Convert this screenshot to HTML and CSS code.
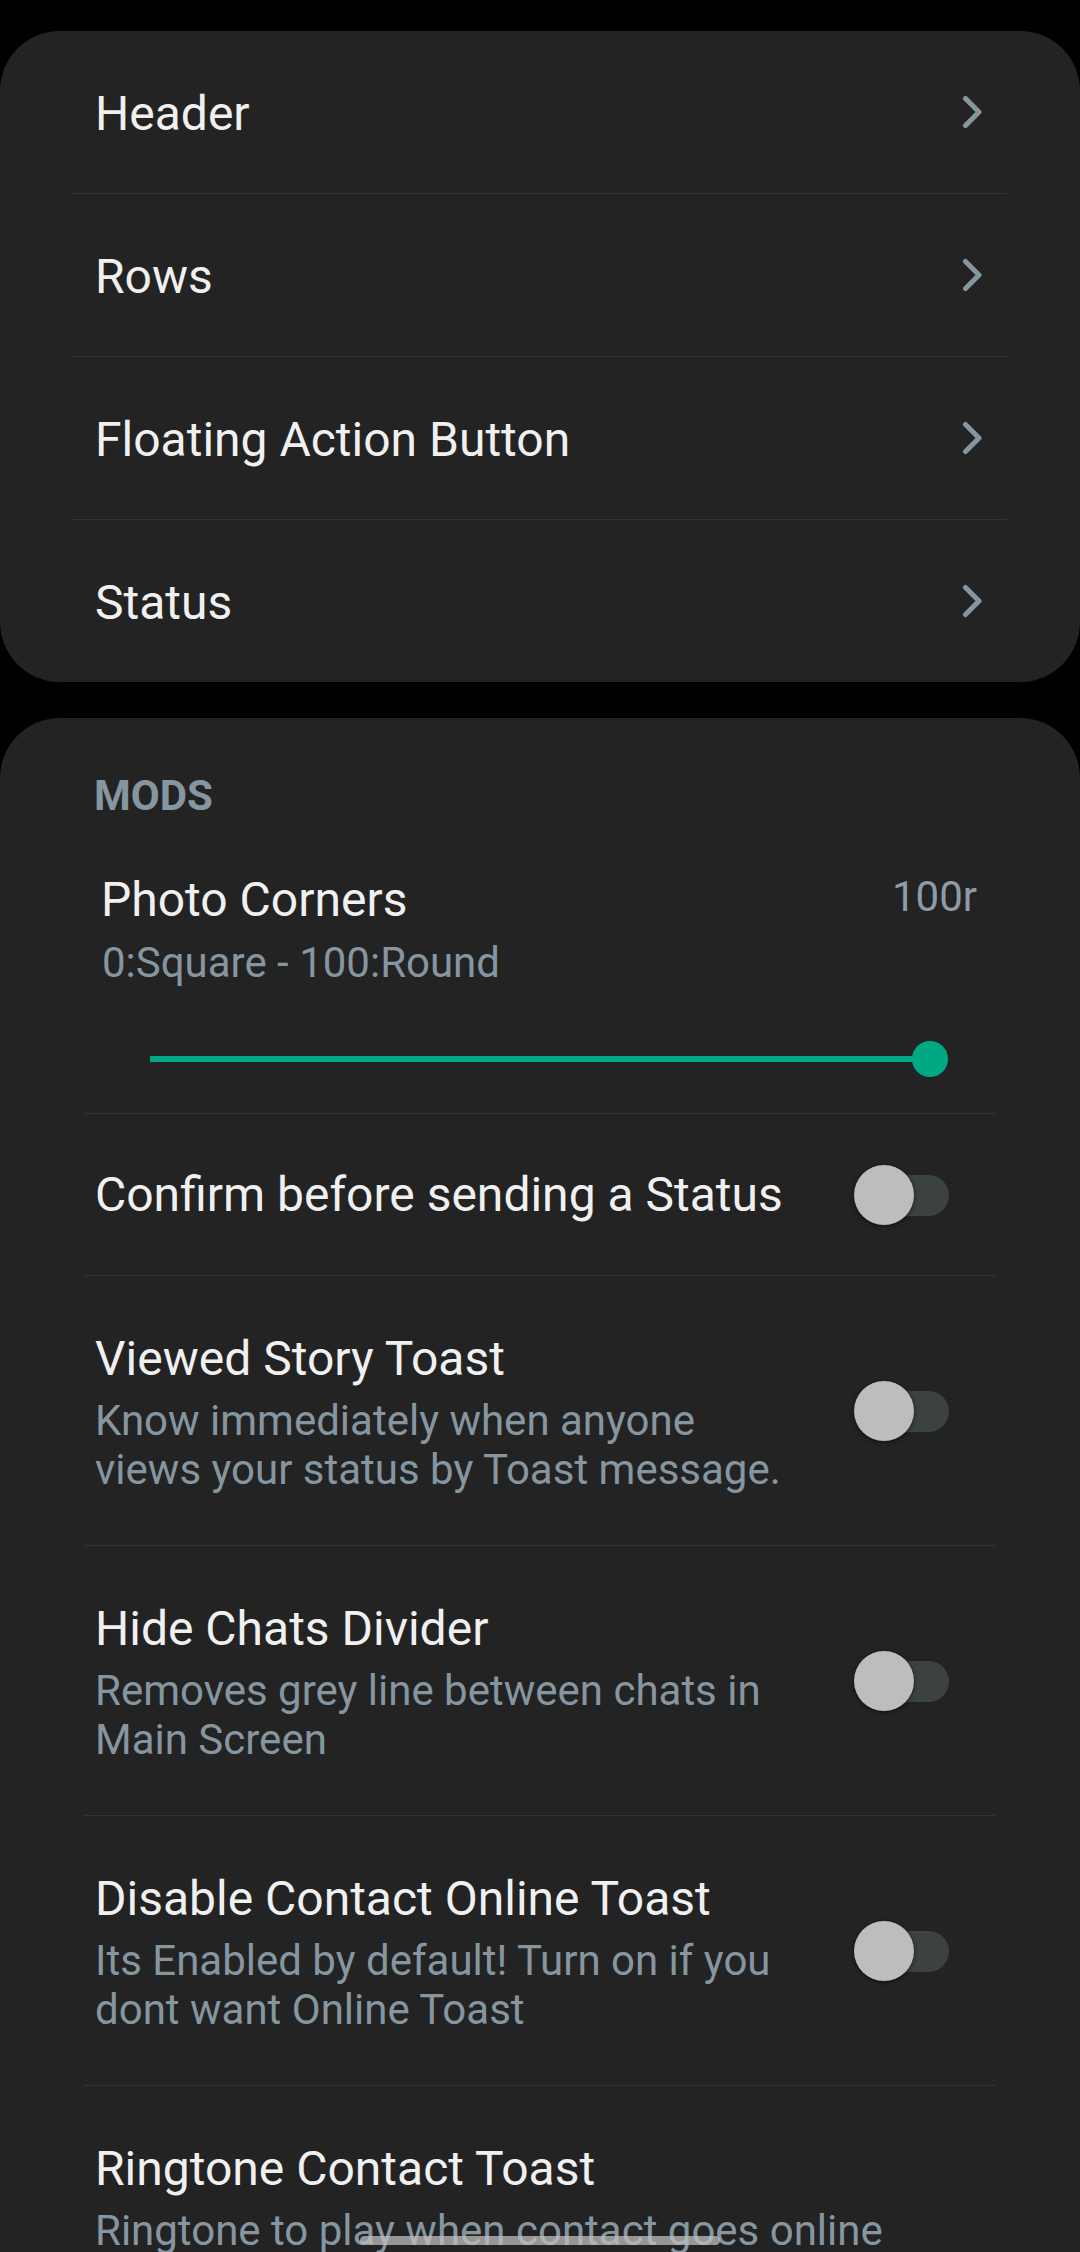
FILE: index.html
```html
<!DOCTYPE html>
<html lang="en">
<head>
<meta charset="utf-8">
<title>Settings</title>
<link rel="stylesheet" href="styles.css">
</head>
<body>
<div class="screen">
  <section class="card nav-card">
    <div class="nav-row"><span class="label">Header</span><svg class="chev" viewBox="0 0 22 34"><path d="M4.5 3.5 L18 17 L4.5 30.5"/></svg></div>
    <div class="divider wide"></div>
    <div class="nav-row"><span class="label">Rows</span><svg class="chev" viewBox="0 0 22 34"><path d="M4.5 3.5 L18 17 L4.5 30.5"/></svg></div>
    <div class="divider wide"></div>
    <div class="nav-row"><span class="label">Floating Action Button</span><svg class="chev" viewBox="0 0 22 34"><path d="M4.5 3.5 L18 17 L4.5 30.5"/></svg></div>
    <div class="divider wide"></div>
    <div class="nav-row"><span class="label">Status</span><svg class="chev" viewBox="0 0 22 34"><path d="M4.5 3.5 L18 17 L4.5 30.5"/></svg></div>
  </section>

  <section class="card mods-card">
    <h2 class="section-title">MODS</h2>

    <div class="slider-pref">
      <div class="slider-head">
        <span class="title">Photo Corners</span>
        <span class="value">100r</span>
      </div>
      <div class="summary">0:Square - 100:Round</div>
      <div class="slider"><div class="track"></div><div class="thumb"></div></div>
    </div>
    <div class="divider inset"></div>

    <div class="switch-row single">
      <div class="text"><div class="title">Confirm before sending a Status</div></div>
      <div class="switch"></div>
    </div>
    <div class="divider inset"></div>

    <div class="switch-row">
      <div class="text">
        <div class="title">Viewed Story Toast</div>
        <div class="summary">Know immediately when anyone<br>views your status by Toast message.</div>
      </div>
      <div class="switch"></div>
    </div>
    <div class="divider inset"></div>

    <div class="switch-row">
      <div class="text">
        <div class="title">Hide Chats Divider</div>
        <div class="summary">Removes grey line between chats in<br>Main Screen</div>
      </div>
      <div class="switch"></div>
    </div>
    <div class="divider inset"></div>

    <div class="switch-row">
      <div class="text">
        <div class="title">Disable Contact Online Toast</div>
        <div class="summary">Its Enabled by default! Turn on if you<br>dont want Online Toast</div>
      </div>
      <div class="switch"></div>
    </div>
    <div class="divider inset"></div>

    <div class="switch-row top">
      <div class="text">
        <div class="title">Ringtone Contact Toast</div>
        <div class="summary">Ringtone to play when contact goes online</div>
      </div>
    </div>
  </section>

  <div class="home-bar"></div>
</div>
</body>
</html>
```

FILE: styles.css
```css
* { box-sizing: border-box; }

html, body {
  margin: 0;
  padding: 0;
  background: #000000;
}

body {
  font-family: Roboto, "Noto Sans", "Liberation Sans", sans-serif;
  color: #f0f0f0;
}

.screen {
  width: 1080px;
  height: 2252px;
  overflow: hidden;
  padding-top: 31px;
}

.card {
  background: #232323;
  border-radius: 60px;
}

.nav-card {
  margin-bottom: 36px;
}

.nav-row {
  height: 162px;
  display: flex;
  align-items: center;
  padding: 3px 97px 0 95px;
}

.label {
  flex: 1;
  font-size: 48px;
  line-height: 56px;
  color: #f0f0f0;
}

.chev {
  width: 22px;
  height: 34px;
  margin-top: -4px;
}

.chev path {
  fill: none;
  stroke: #8696a0;
  stroke-width: 5;
  stroke-linecap: round;
  stroke-linejoin: round;
}

.divider {
  height: 1px;
  background: #333333;
}

.divider.wide {
  margin: 0 73px 0 72px;
}

.divider.inset {
  margin: 0 85px 0 84px;
}

.mods-card {
  padding-top: 53px;
  min-height: 1600px;
}

.section-title {
  margin: 0;
  padding-left: 94px;
  font-size: 42px;
  line-height: 49px;
  font-weight: 700;
  color: #8696a0;
}

.slider-pref {
  padding: 52px 0 36px 0;
}

.slider-head {
  display: flex;
  align-items: flex-start;
  justify-content: space-between;
  padding: 0 103px 0 101px;
}

.title {
  font-size: 48px;
  line-height: 56px;
  color: #f0f0f0;
}

.value {
  font-size: 42px;
  line-height: 49px;
  color: #8d9ca6;
}

.summary {
  font-size: 42px;
  line-height: 49px;
  color: #8696a0;
}

.slider-pref .summary {
  margin-top: 10px;
  padding-left: 102px;
}

.slider {
  display: flex;
  align-items: center;
  height: 36px;
  margin: 54px 132px 0 150px;
}

.track {
  flex: 1;
  height: 6px;
  background: #00a884;
  margin-right: -18px;
}

.thumb {
  width: 36px;
  height: 36px;
  border-radius: 50%;
  background: #00a884;
  position: relative;
}

.switch-row {
  display: flex;
  align-items: center;
  height: 269px;
  padding: 55px 131px 51px 95px;
}

.switch-row .switch {
  margin-top: -4px;
}

.switch-row.single {
  height: 161px;
  padding: 53px 131px 52px 95px;
}

.switch-row.single .switch {
  margin-top: 0;
}

.switch-row.top {
  align-items: flex-start;
}

.text {
  flex: 1;
  min-width: 0;
}

.text .summary {
  margin-top: 9px;
  white-space: nowrap;
}

.switch {
  position: relative;
  width: 95px;
  height: 60px;
  flex: none;
}

.switch::before {
  content: "";
  position: absolute;
  right: 0;
  top: 10px;
  width: 88px;
  height: 41px;
  border-radius: 21px;
  background: #3c4242;
}

.switch::after {
  content: "";
  position: absolute;
  left: 0;
  top: 0;
  width: 60px;
  height: 60px;
  border-radius: 50%;
  background: #bdbdbd;
  box-shadow: 0 1px 4px rgba(0, 0, 0, 0.6);
}

.home-bar {
  position: fixed;
  left: 360px;
  bottom: 7px;
  width: 360px;
  height: 9px;
  border-radius: 5px;
  background: rgba(190, 190, 190, 0.75);
}
```
